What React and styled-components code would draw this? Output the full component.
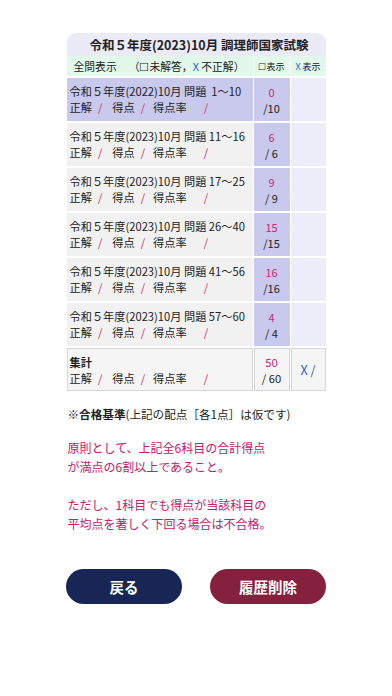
import React from 'react'
import styled, { createGlobalStyle } from 'styled-components'

const GlobalStyle = createGlobalStyle`
  body {
    margin: 0;
    background: #ffffff;
    font-family: "Noto Sans CJK JP", "Noto Sans", sans-serif;
    color: #222;
  }
`

const Page = styled.div`
  width: 392px;
  height: 696px;
  padding-top: 33px;
  box-sizing: border-box;
`

const Table = styled.div`
  width: 259px;
  margin: 0 auto;
  display: grid;
  grid-template-columns: 186px 36px 1fr;
  column-gap: 1px;
  background: #fff;
`

const Title = styled.div`
  grid-column: 1 / 4;
  height: 23px;
  border-radius: 9px 9px 0 0;
  background: #ebebf8;
  font-size: 12.5px;
  font-weight: 700;
  display: flex;
  align-items: center;
  justify-content: center;
  padding-left: 6px;
`

const HeadCell = styled.div`
  height: 20px;
  background: #e2f8ea;
  font-size: ${p => (p.small ? '9px' : '10.8px')};
  display: flex;
  align-items: center;
  justify-content: ${p => (p.small ? 'center' : 'flex-start')};
  padding-left: ${p => (p.small ? '0' : '7px')};
  white-space: pre;
`

const Gap = styled.span`
  display: inline-block;
  width: ${p => p.w}px;
`

const Blue = styled.span`
  color: #2a62c8;
`

const NameCell = styled.div`
  height: 43px;
  margin-top: 2px;
  background: ${p => (p.active ? '#c9c9ee' : '#f1f1f1')};
  font-size: 11.2px;
  line-height: 16px;
  padding: 5px 0 0 3px;
  box-sizing: border-box;
  white-space: pre;
`

const ScoreCell = styled.div`
  height: 43px;
  margin-top: 2px;
  background: #c9c9ee;
  font-size: 11px;
  line-height: 16px;
  display: flex;
  flex-direction: column;
  align-items: center;
  justify-content: center;
`

const MarkCell = styled.div`
  height: 43px;
  margin-top: 2px;
  background: #ededfa;
`

const Pink = styled.span`
  color: #c2287a;
`

const Slash = styled.span`
  color: #d0306a;
  display: inline-block;
  margin: 0 ${p => p.after}px 0 ${p => p.before}px;
`

const TotalCell = styled.div`
  height: 43px;
  margin-top: 2px;
  background: #f5f5f5;
  border: 1px solid #d6d6d6;
  box-sizing: border-box;
  font-size: ${p => (p.mark ? '12.5px' : '11.2px')};
  line-height: 16px;
  display: flex;
  flex-direction: column;
  justify-content: center;
  align-items: ${p => (p.name ? 'flex-start' : 'center')};
  padding-left: ${p => (p.name ? '2px' : '0')};
  white-space: pre;
`

const Bold = styled.b`
  font-weight: 700;
`

const Note = styled.div`
  width: 259px;
  margin: 14px auto 0;
  font-size: 11.6px;
  line-height: 19px;
  padding-left: 2px;
`

const Rule = styled.p`
  margin: ${p => p.mt}px 0 0;
  color: #c2206a;
  font-size: 12px;
  line-height: 19px;
`

const Buttons = styled.div`
  width: 260px;
  margin: 36px auto 0;
  display: flex;
  justify-content: space-between;
`

const Button = styled.button`
  width: 116px;
  height: 35px;
  border: none;
  border-radius: 18px;
  background: ${p => p.bg};
  color: #fff;
  font-family: inherit;
  font-size: 14.5px;
  font-weight: 700;
`

const rows = [
  { name: '令和５年度(2022)10月 問題  1〜10', score: 0, total: 10, active: true },
  { name: '令和５年度(2023)10月 問題 11〜16', score: 6, total: 6 },
  { name: '令和５年度(2023)10月 問題 17〜25', score: 9, total: 9 },
  { name: '令和５年度(2023)10月 問題 26〜40', score: 15, total: 15 },
  { name: '令和５年度(2023)10月 問題 41〜56', score: 16, total: 16 },
  { name: '令和５年度(2023)10月 問題 57〜60', score: 4, total: 4 },
]

function Result() {
  return (
    <span>
      正解<Slash before={6} after={10}>/</Slash>
      得点<Slash before={6} after={8}>/</Slash>
      得点率<Slash before={17} after={0}>/</Slash>
    </span>
  )
}

export default function App() {
  return (
    <Page>
      <GlobalStyle />
      <Table>
        <Title>令和５年度(2023)10月 調理師国家試験</Title>
        <HeadCell>
          全問表示<Gap w={12} />（☐未解答，<Blue>X</Blue> 不正解）
        </HeadCell>
        <HeadCell small>☐表示</HeadCell>
        <HeadCell small>
          <span><Blue>X</Blue> 表示</span>
        </HeadCell>
        {rows.map(r => (
          <React.Fragment key={r.name}>
            <NameCell active={r.active}>
              <div>{r.name}</div>
              <div><Result /></div>
            </NameCell>
            <ScoreCell>
              <Pink>{r.score}</Pink>
              <span>{r.total < 10 ? '/ ' + r.total : '/' + r.total}</span>
            </ScoreCell>
            <MarkCell />
          </React.Fragment>
        ))}
        <TotalCell name>
          <Bold>集計</Bold>
          <div><Result /></div>
        </TotalCell>
        <TotalCell>
          <Pink>50</Pink>
          <span>/ 60</span>
        </TotalCell>
        <TotalCell mark>
          <Blue>X /</Blue>
        </TotalCell>
      </Table>
      <Note>
        <Bold>※合格基準</Bold>(上記の配点［各1点］は仮です)
        <Rule mt={14}>
          原則として、上記全6科目の合計得点<br />が満点の6割以上であること。
        </Rule>
        <Rule mt={19}>
          ただし、1科目でも得点が当該科目の<br />平均点を著しく下回る場合は不合格。
        </Rule>
      </Note>
      <Buttons>
        <Button bg="#172655">戻る</Button>
        <Button bg="#85213e">履歴削除</Button>
      </Buttons>
    </Page>
  )
}
